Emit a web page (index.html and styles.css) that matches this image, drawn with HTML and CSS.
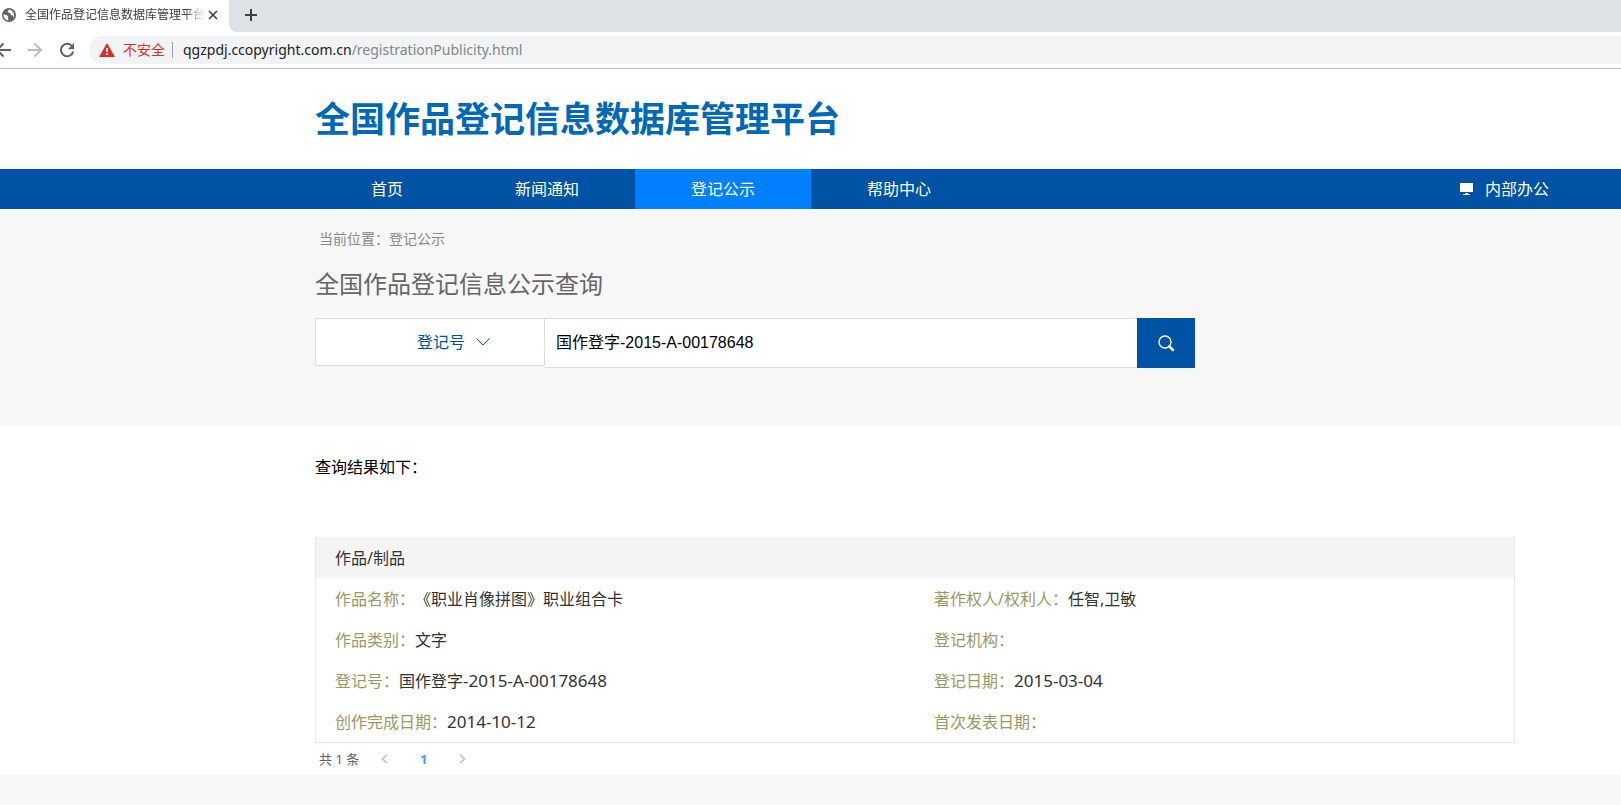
FILE: index.html
```html
<!DOCTYPE html>
<html lang="zh-CN">
<head>
<meta charset="utf-8">
<title>全国作品登记信息数据库管理平台</title>
<link rel="stylesheet" href="styles.css">
</head>
<body>
<div class="browser">
  <div class="tabs">
    <div class="tab">
      <svg class="tab-icon" viewBox="0 0 14 14" aria-hidden="true"><circle cx="7" cy="7" r="7" fill="#5f6368"/><path d="M1.500 6.200 4.200 7 6.300 8.200 5.900 9.800 6.600 12.500A5.600 5.600 0 0 1 1.500 6.200zM7.200 1.500 5.500 3.200 6.600 4.700 8.300 5.300 8.900 7.200 10.900 7.600 11.200 9.900A5.600 5.600 0 0 0 7.200 1.500z" fill="#fff"/></svg>
      <span class="tab-title">全国作品登记信息数据库管理平台</span>
      <button class="plain" aria-label="关闭标签页"><svg width="10" height="10" viewBox="0 0 10 10"><path d="M1 1l8 8M9 1L1 9" stroke="#3c4043" stroke-width="1.7"/></svg></button>
    </div>
    <div class="tab-rest">
      <button class="plain" aria-label="新标签页"><svg width="12" height="12" viewBox="0 0 12 12"><path d="M6 0v12M0 6h12" stroke="#3c4043" stroke-width="2"/></svg></button>
    </div>
  </div>
  <div class="toolbar">
    <button class="plain back" aria-label="后退"><svg width="16" height="16" viewBox="0 0 16 16"><path d="M16 8H2M8.500 1.500 2 8l6.500 6.500" fill="none" stroke="#5f6368" stroke-width="2"/></svg></button>
    <button class="plain" aria-label="前进"><svg width="16" height="16" viewBox="0 0 16 16"><path d="M1 8h13M7.500 1.500 14 8l-6.500 6.500" fill="none" stroke="#babcbe" stroke-width="2"/></svg></button>
    <button class="plain" aria-label="重新加载"><svg width="16" height="16" viewBox="0 0 16 16"><path d="M13.200 4.400A6.200 6.200 0 1 0 14.200 9.500" fill="none" stroke="#5f6368" stroke-width="2"/><path d="M15 1v6.200H8.800z" fill="#5f6368"/></svg></button>
    <div class="address">
      <svg width="16" height="14" viewBox="0 0 16 14" aria-hidden="true"><path d="M8 0l8 14H0z" fill="#d93025"/><path d="M7.200 5h1.800v4H7.200zM7.200 10.300h1.800V12H7.200z" fill="#fff"/></svg>
      <span class="unsafe">不安全</span>
      <span class="url">qgzpdj.ccopyright.com.cn<span class="path">/registrationPublicity.html</span></span>
    </div>
  </div>
</div>

<header class="site-header"><h1 class="logo">全国作品登记信息数据库管理平台</h1></header>
<nav class="nav">
  <a href="#">首页</a>
  <a href="#">新闻通知</a>
  <a href="#" class="active">登记公示</a>
  <a href="#">帮助中心</a>
  <a href="#" class="office"><svg width="13" height="12" viewBox="0 0 13 12" aria-hidden="true"><path d="M0 0h13v9H0zM5 10h3v1h2v1H3v-1h2z" fill="#fff"/></svg>内部办公</a>
</nav>

<section class="search">
  <p class="crumbs">当前位置：登记公示</p>
  <h2 class="search-title">全国作品登记信息公示查询</h2>
  <form class="search-form">
    <div class="field">
      <select aria-label="查询类型"><option>登记号</option></select>
      <svg class="chevron" width="14" height="8" viewBox="0 0 14 8" aria-hidden="true"><path d="M.5.500 7 7 13.500.500" fill="none" stroke="#0053a4"/></svg>
    </div>
    <input class="query" type="text" aria-label="查询内容" value="国作登字-2015-A-00178648">
    <button class="go" type="button" aria-label="查询"><svg width="17" height="17" viewBox="0 0 17 17"><circle cx="7" cy="7" r="6" fill="none" stroke="#fff" stroke-width="1.400"/><path d="M11.300 11.300 15 15" stroke="#fff" stroke-width="2.600" stroke-linecap="round"/></svg></button>
  </form>
</section>

<main class="results">
  <p class="results-title">查询结果如下：</p>
  <section class="card">
    <h3 class="card-head">作品/制品</h3>
    <dl class="details">
      <div class="item"><dt>作品名称：</dt><dd>《职业肖像拼图》职业组合卡</dd></div>
      <div class="item"><dt>著作权人/权利人：</dt><dd>任智,卫敏</dd></div>
      <div class="item"><dt>作品类别：</dt><dd>文字</dd></div>
      <div class="item"><dt>登记机构：</dt><dd></dd></div>
      <div class="item"><dt>登记号：</dt><dd>国作登字<span class="num">-2015-A-00178648</span></dd></div>
      <div class="item"><dt>登记日期：</dt><dd class="num">2015-03-04</dd></div>
      <div class="item"><dt>创作完成日期：</dt><dd class="num">2014-10-12</dd></div>
      <div class="item"><dt>首次发表日期：</dt><dd></dd></div>
    </dl>
  </section>
  <div class="pager">
    <span>共 1 条</span>
    <button class="plain" aria-label="上一页"><svg width="7" height="10" viewBox="0 0 7 10"><path d="M6 .8 1.500 5 6 9.200" fill="none" stroke="#c0c4cc" stroke-width="1.600"/></svg></button>
    <button class="plain current">1</button>
    <button class="plain" aria-label="下一页"><svg width="7" height="10" viewBox="0 0 7 10"><path d="M1 .8 5.500 5 1 9.200" fill="none" stroke="#c0c4cc" stroke-width="1.600"/></svg></button>
  </div>
</main>
</body>
</html>
```
FILE: styles.css
```css
* { box-sizing: border-box; }
body, h1, h2, h3, p, dl, dd { margin: 0; }
body {
  background: #f7f7f7;
  color: #333;
  font: 16px/24px "Noto Sans", "Noto Sans CJK SC", sans-serif;
  overflow-x: hidden;
}
a { color: inherit; text-decoration: none; }
svg { display: block; flex: none; }
.plain {
  display: flex;
  align-items: center;
  justify-content: center;
  padding: 0;
  border: 0;
  background: none;
  font: inherit;
}

.browser { background: #fff; border-bottom: 1px solid #b6b7b9; }
.tabs { display: flex; height: 32px; background: #fff; }
.tab {
  display: flex;
  align-items: center;
  width: 229px;
  height: 30px;
  padding-left: 2px;
}
.tab-icon { width: 14px; height: 14px; }
.tab-title {
  width: 180px;
  margin: 0 3px 0 9px;
  white-space: nowrap;
  color: #3c4043;
  font-size: 12px;
  -webkit-mask-image: linear-gradient(to right, #000 160px, transparent 180px);
  mask-image: linear-gradient(to right, #000 160px, transparent 180px);
}
.tab-rest {
  display: flex;
  align-items: center;
  flex: 1;
  padding: 0 0 2px 16px;
  border-bottom-left-radius: 8px;
  background: #dee1e6;
}
.toolbar { display: flex; align-items: center; height: 36px; gap: 16px; }
.back { margin-left: -5px; }
.address {
  display: flex;
  align-items: center;
  flex: 1;
  height: 28px;
  margin-left: -2px;
  padding-left: 10px;
  border-radius: 14px 0 0 14px;
  background: #f1f3f4;
  color: #202124;
  font-size: 14px;
}
.unsafe {
  margin: 0 10px 0 8px;
  padding-right: 7px;
  border-right: 1px solid #9aa0a6;
  color: #d93025;
  line-height: 16px;
}
.path { color: #80868b; }

.site-header {
  display: flex;
  align-items: center;
  height: 100px;
  padding: 0 0 4px 315px;
  background: #fff;
}
.logo {
  color: #0068b7;
  font: 700 35px/48px "Noto Sans CJK SC", sans-serif;
}
.nav {
  display: flex;
  padding: 0 16px 0 315px;
  background: #0053a4;
  color: #fff;
  line-height: 40px;
}
.nav a { padding: 0 56px; }
.nav .active { background: #0080ff; }
.nav .office {
  display: flex;
  align-items: center;
  gap: 12px;
  margin-left: auto;
}

.search { padding: 18px 0 58px 315px; background: #f7f7f7; }
.crumbs { padding-left: 4px; color: #888; font-size: 14px; }
.search-title {
  margin: 15px 0 17px;
  color: #666;
  font-size: 24px;
  font-weight: 400;
  line-height: 35px;
}
.search-form { display: flex; align-items: flex-start; width: 880px; }
.field { position: relative; width: 230px; }
.field select {
  width: 100%;
  height: 48px;
  padding: 0 0 0 101px;
  border: 1px solid #ddd;
  border-radius: 0;
  appearance: none;
  background: #fff;
  color: #0053a4;
  font: inherit;
}
.chevron { position: absolute; top: 20px; right: 55px; pointer-events: none; }
.query {
  flex: 1;
  height: 50px;
  padding: 0 11px 4px;
  border: solid #ddd;
  border-width: 1px 0;
  background: #fff;
  color: #000;
  font: 16px "Liberation Sans", "Noto Sans CJK SC", sans-serif;
}
.go {
  display: grid;
  place-items: center;
  width: 58px;
  height: 50px;
  border: 0;
  background: #0053a4;
}

.results { padding: 29px 106px 0 315px; background: #fff; }
.results-title { color: #000; }
.card { margin-top: 58px; border: 1px solid #e8e8e8; border-top: 0; }
.card-head {
  padding: 1px 19px 0;
  background: #f4f4f4;
  font-size: 16px;
  font-weight: 400;
  line-height: 40px;
}
.details { display: grid; grid-template-columns: 1fr 1fr; line-height: 42px; }
.item { display: flex; height: 41px; padding-left: 19px; }
.item dt { color: #996; }
.num { font-size: 17px; }
.pager {
  display: flex;
  align-items: center;
  height: 32px;
  padding-left: 4px;
  color: #606266;
  font-size: 13px;
}
.pager .plain { width: 39px; }
.pager .plain:first-of-type { margin-left: 6px; }
.pager .current { color: #409eff; font-weight: 700; }
```
